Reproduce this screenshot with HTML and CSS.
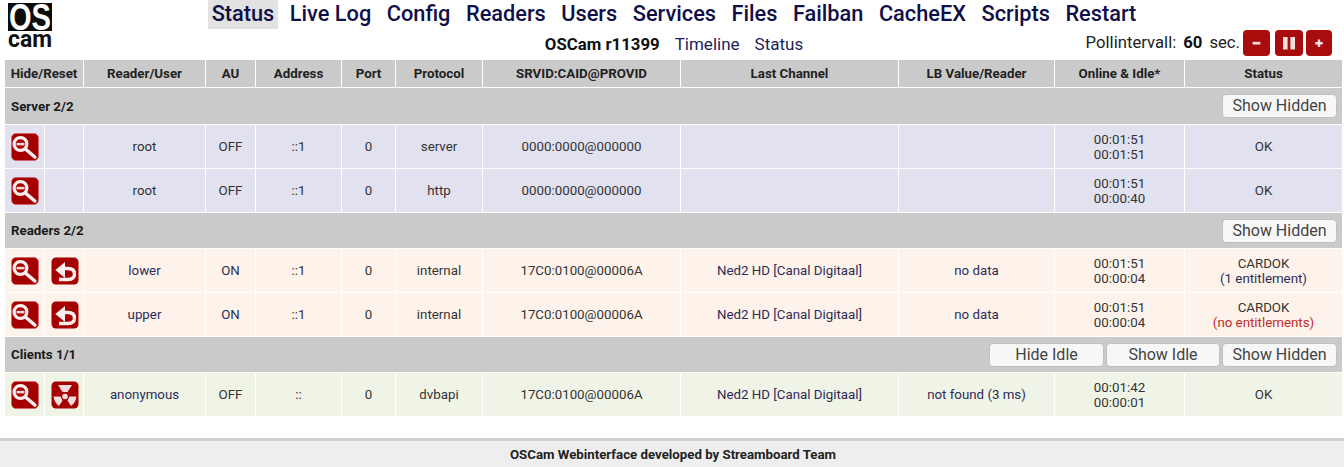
FILE: index.html
```html
<!DOCTYPE html>
<html lang="en">
<head>
<meta charset="utf-8">
<title>OSCam Status</title>
<link rel="stylesheet" href="styles.css">
</head>
<body>
<svg class="defs" width="0" height="0" aria-hidden="true">
  <symbol id="i-zoom" viewBox="0 0 28 28">
    <rect x="0.5" y="0.5" width="27" height="27" rx="4.5" fill="#a50000" stroke="#d9606a" stroke-width="0.6"/>
    <circle cx="9.5" cy="11" r="6.4" fill="none" stroke="#fbeeee" stroke-width="3.2"/>
    <rect x="5.5" y="9.8" width="8" height="2.6" fill="#f3d5d5"/>
    <path d="M15 16.5 L23.8 24" stroke="#fbeeee" stroke-width="3.6" stroke-linecap="round"/>
  </symbol>
  <symbol id="i-reset" viewBox="0 0 28 28">
    <rect x="0.5" y="0.5" width="27" height="27" rx="4.5" fill="#a50000"/>
    <path d="M4.3 13 L14 5 V21 Z" fill="#fbeeee"/>
    <path d="M13 11.5 H17 Q23.5 11.5 23.5 17 Q23.5 22.5 17 22.5 H8" fill="none" stroke="#fbeeee" stroke-width="3.4"/>
  </symbol>
  <symbol id="i-nuke" viewBox="0 0 28 28">
    <rect x="0.5" y="0.5" width="27" height="27" rx="4.5" fill="#a50000"/>
    <circle cx="14" cy="15.5" r="2.8" fill="#f6dcdc"/>
    <path d="M7 4 H21 L16.5 11 H11.5 Z" fill="#f6dcdc"/>
    <path d="M2.5 15.5 H9.5 L11.5 19.5 L8 25 Q3.5 22 2.5 15.5 Z" fill="#f6dcdc"/>
    <path d="M25.5 15.5 H18.5 L16.5 19.5 L20 25 Q24.5 22 25.5 15.5 Z" fill="#f6dcdc"/>
  </symbol>
</svg>

<header class="top">
  <svg class="logo" viewBox="0 0 44 46" width="44" height="46" role="img" aria-label="OScam">
    <rect class="logo-box" width="44" height="28"/>
    <text class="logo-os" x="1" y="27" textLength="42" lengthAdjust="spacingAndGlyphs">OS</text>
    <text class="logo-cam" x="0" y="43.5" textLength="44" lengthAdjust="spacingAndGlyphs">cam</text>
  </svg>
  <nav class="menu">
    <a class="menu-item is-active">Status</a>
    <a class="menu-item">Live Log</a>
    <a class="menu-item">Config</a>
    <a class="menu-item">Readers</a>
    <a class="menu-item">Users</a>
    <a class="menu-item">Services</a>
    <a class="menu-item">Files</a>
    <a class="menu-item">Failban</a>
    <a class="menu-item">CacheEX</a>
    <a class="menu-item">Scripts</a>
    <a class="menu-item">Restart</a>
  </nav>
  <div class="subnav">
    <b class="version">OSCam r11399</b>
    <a class="sublink">Timeline</a>
    <a class="sublink">Status</a>
  </div>
  <div class="poll">
    <span>Pollintervall:</span>
    <b class="poll-value">60</b>
    <span>sec.</span>
    <span class="poll-buttons">
      <button class="poll-btn"><svg viewBox="0 0 28 26" width="28" height="26"><rect x="10" y="11.8" width="8" height="2.8" fill="#f5e0e0"/></svg></button>
      <button class="poll-btn poll-btn-mid"><svg viewBox="0 0 28 26" width="28" height="26"><rect x="8" y="7" width="4.6" height="12.5" fill="#f5e0e0"/><rect x="15.4" y="7" width="4.6" height="12.5" fill="#f5e0e0"/></svg></button>
      <button class="poll-btn poll-btn-end"><svg viewBox="0 0 28 26" width="28" height="26"><path d="M10 13.2H18M14 9.2V17.2" stroke="#f5e0e0" stroke-width="2.6"/></svg></button>
    </span>
  </div>
</header>

<table class="status">
  <colgroup>
    <col class="c-a"><col class="c-b"><col class="c-user"><col class="c-au"><col class="c-addr"><col class="c-port"><col class="c-proto"><col class="c-srv"><col class="c-chan"><col class="c-lb"><col class="c-online"><col class="c-stat">
  </colgroup>
  <thead>
    <tr class="head">
      <th colspan="2">Hide/Reset</th><th>Reader/User</th><th>AU</th><th>Address</th><th>Port</th><th>Protocol</th><th>SRVID:CAID@PROVID</th><th>Last Channel</th><th>LB Value/Reader</th><th>Online &amp; Idle*</th><th>Status</th>
    </tr>
  </thead>
  <tbody>
    <tr class="band band-first">
      <td colspan="12"><div class="band-in"><b>Server 2/2</b><span class="band-btns"><button class="btn">Show Hidden</button></span></div></td>
    </tr>
    <tr class="row server">
      <td class="ic"><svg class="icon"><use href="#i-zoom"/></svg></td><td></td>
      <td>root</td><td>OFF</td><td>::1</td><td>0</td><td>server</td><td>0000:0000@000000</td><td></td><td></td><td>00:01:51<br>00:01:51</td><td>OK</td>
    </tr>
    <tr class="row server">
      <td class="ic"><svg class="icon"><use href="#i-zoom"/></svg></td><td></td>
      <td>root</td><td>OFF</td><td>::1</td><td>0</td><td>http</td><td>0000:0000@000000</td><td></td><td></td><td>00:01:51<br>00:00:40</td><td>OK</td>
    </tr>
    <tr class="band">
      <td colspan="12"><div class="band-in"><b>Readers 2/2</b><span class="band-btns"><button class="btn">Show Hidden</button></span></div></td>
    </tr>
    <tr class="row reader">
      <td class="ic"><svg class="icon"><use href="#i-zoom"/></svg></td><td class="ic"><svg class="icon"><use href="#i-reset"/></svg></td>
      <td class="name">lower</td><td class="name">ON</td><td>::1</td><td>0</td><td>internal</td><td>17C0:0100@00006A</td><td class="name">Ned2 HD [Canal Digitaal]</td><td class="name">no data</td><td>00:01:51<br>00:00:04</td><td>CARDOK<br><span class="name">(1 entitlement)</span></td>
    </tr>
    <tr class="row reader">
      <td class="ic"><svg class="icon"><use href="#i-zoom"/></svg></td><td class="ic"><svg class="icon"><use href="#i-reset"/></svg></td>
      <td class="name">upper</td><td class="name">ON</td><td>::1</td><td>0</td><td>internal</td><td>17C0:0100@00006A</td><td class="name">Ned2 HD [Canal Digitaal]</td><td class="name">no data</td><td>00:01:51<br>00:00:04</td><td>CARDOK<br><span class="bad">(no entitlements)</span></td>
    </tr>
    <tr class="band">
      <td colspan="12"><div class="band-in"><b>Clients 1/1</b><span class="band-btns"><button class="btn">Hide Idle</button><button class="btn btn-mid">Show Idle</button><button class="btn">Show Hidden</button></span></div></td>
    </tr>
    <tr class="row client">
      <td class="ic"><svg class="icon"><use href="#i-zoom"/></svg></td><td class="ic"><svg class="icon"><use href="#i-nuke"/></svg></td>
      <td class="name">anonymous</td><td>OFF</td><td>::</td><td>0</td><td>dvbapi</td><td>17C0:0100@00006A</td><td class="name">Ned2 HD [Canal Digitaal]</td><td class="name">not found (3 ms)</td><td>00:01:42<br>00:00:01</td><td>OK</td>
    </tr>
  </tbody>
</table>

<footer class="foot">OSCam Webinterface developed by Streamboard Team</footer>
</body>
</html>
```
FILE: styles.css
```css
* { box-sizing: border-box; }
html, body { margin: 0; padding: 0; }
body {
  width: 1344px;
  height: 467px;
  overflow: hidden;
  background: #fff;
  font-family: Roboto, "Liberation Sans", sans-serif;
  color: #33333f;
}
.defs { display: block; height: 0; }

.top {
  display: grid;
  grid-template-columns: minmax(0, 1fr) auto minmax(0, 1fr);
  grid-template-rows: 29px 30px;
  height: 59px;
}
.logo {
  grid-column: 1;
  grid-row: 1 / span 2;
  justify-self: start;
  margin: 3px 0 0 8px;
  overflow: visible;
}
.logo-box { fill: #0c0c0c; }
.logo-os {
  fill: #fff;
  font: 700 36px "Liberation Sans", sans-serif;
}
.logo-cam {
  fill: #111;
  font: 700 24px Roboto, sans-serif;
}
.menu {
  grid-column: 2;
  grid-row: 1;
  display: flex;
  gap: 7.5px;
  justify-content: center;
  margin-left: 4px;
}
.menu-item {
  padding: 0 4px;
  height: 29px;
  font-size: 21.75px;
  font-weight: 500;
  line-height: 27px;
  color: #101048;
}
.menu-item.is-active { background: #e2e2e2; }
.subnav {
  grid-column: 2;
  grid-row: 2;
  display: flex;
  justify-content: center;
  gap: 15px;
  margin-left: 4px;
  padding-top: 5px;
  font-size: 17px;
  line-height: 20px;
  color: #1c2358;
}
.version { font-weight: 700; font-size: 16.8px; color: #111; }
.poll {
  grid-column: 2 / span 2;
  grid-row: 2;
  justify-self: end;
  display: flex;
  align-items: flex-start;
  gap: 5px;
  padding: 1px 12px 0 0;
  font-size: 16.7px;
  line-height: 26px;
  color: #222;
}
.poll-value { font-weight: 700; margin: 0 2px; color: #111; }
.poll-buttons { display: flex; gap: 5px; margin-left: -2px; }
.poll-btn {
  flex: none;
  width: 27px;
  height: 26px;
  padding: 0;
  border: 0;
  border-radius: 4px;
  background: #a80c0c;
  display: flex;
  align-items: center;
  justify-content: center;
}
.poll-btn-mid { width: 28px; margin-right: -2px; }
.poll-btn-end { width: 26px; }

.status {
  table-layout: fixed;
  border-collapse: separate;
  border-spacing: 1px;
  width: 1339px;
  margin-left: 4px;
  font-size: 13.3px;
  line-height: 15px;
}
.c-a { width: 39px; }
.c-b { width: 38px; }
.c-user { width: 121px; }
.c-au { width: 49px; }
.c-addr { width: 85px; }
.c-port { width: 53px; }
.c-proto { width: 86px; }
.c-srv { width: 197px; }
.c-chan { width: 217px; }
.c-lb { width: 155px; }
.c-online { width: 129px; }
.status th {
  height: 27px;
  padding: 0;
  background: #cacaca;
  color: #222;
  font-size: 13.3px;
  font-weight: 700;
  text-align: center;
}
.band td {
  height: 35px;
  padding: 0 5px 0 6px;
  background: #cacaca;
}
.band-first td { height: 36px; }
.band-in {
  display: flex;
  align-items: center;
  justify-content: space-between;
  color: #1a1a1a;
  font-size: 13.3px;
}
.band-btns { display: flex; gap: 2px; }
.btn {
  width: 115px;
  height: 24px;
  padding: 0;
  border: 1px solid #c0c0c0;
  border-radius: 4px;
  background: #f7f7f7;
  color: #444;
  font: 400 16px/20px Roboto, sans-serif;
}
.btn-mid { width: 114px; }
.row td {
  height: 43px;
  padding: 0;
  text-align: center;
  vertical-align: middle;
  color: #333;
}
.row td.name { color: #2c2c58; }
.row td .name { color: #2c2c58; }
.row td.ic { padding-left: 6px; text-align: left; }
.server td { background: #e1e1ef; }
.reader td { background: #fef3ea; }
.client td { background: #f0f4e7; }
.bad { color: #c22a2a; }
.icon { display: block; width: 28px; height: 28px; }

.foot {
  margin-top: 21px;
  height: 29px;
  padding-left: 2px;
  border-top: 3px solid #d0d0d0;
  background: #eeeeee;
  text-align: center;
  font-size: 13.25px;
  font-weight: 700;
  line-height: 28px;
  color: #222;
}
```
